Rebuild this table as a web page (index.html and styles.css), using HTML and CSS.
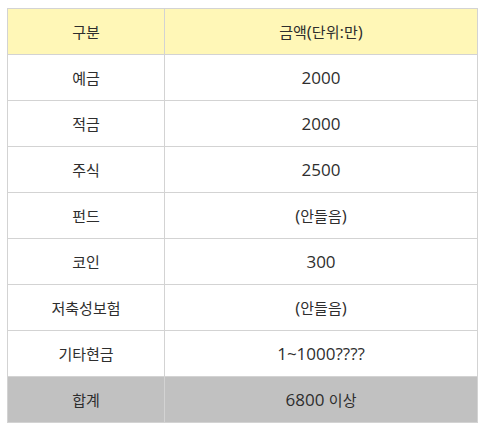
FILE: index.html
```html
<!DOCTYPE html>
<html lang="ko">
<head>
<meta charset="utf-8">
<link rel="stylesheet" href="styles.css">
</head>
<body>
<div class="wrap">
<table class="money">
  <thead>
    <tr><th>구분</th><th>금액<span class="lat">(</span>단위<span class="lat">:</span>만<span class="lat">)</span></th></tr>
  </thead>
  <tbody>
    <tr><td>예금</td><td><span class="lat">2000</span></td></tr>
    <tr><td>적금</td><td><span class="lat">2000</span></td></tr>
    <tr><td>주식</td><td><span class="lat">2500</span></td></tr>
    <tr><td>펀드</td><td><span class="lat">(</span>안들음<span class="lat">)</span></td></tr>
    <tr><td>코인</td><td><span class="lat">300</span></td></tr>
    <tr><td>저축성보험</td><td><span class="lat">(</span>안들음<span class="lat">)</span></td></tr>
    <tr><td>기타현금</td><td><span class="lat">1~1000????</span></td></tr>
  </tbody>
  <tfoot>
    <tr><td>합계</td><td><span class="lat">6800 </span>이상</td></tr>
  </tfoot>
</table>
</div>
</body>
</html>
```

FILE: styles.css
```css
html, body {
  margin: 0;
  padding: 0;
  background: #ffffff;
}
.wrap {
  padding: 8px 0 0 7px;
}
.money {
  border-collapse: collapse;
  width: 471px;
  table-layout: fixed;
  font-family: "Noto Sans CJK KR", "Noto Sans", sans-serif;
  font-size: 15px;
  color: #2e2e2e;
}
.money th,
.money td {
  border: 1px solid #d3d3d3;
  height: 45px;
  padding: 0;
  text-align: center;
  vertical-align: middle;
  font-weight: normal;
  line-height: 20px;
}
.money th:first-child,
.money td:first-child {
  width: 156px;
}
.money thead th {
  background: #fff7b7;
}
.money tfoot td {
  background: #c1c1c1;
}
.lat {
  font-family: "Open Sans", sans-serif;
  font-size: 17px;
}
```
